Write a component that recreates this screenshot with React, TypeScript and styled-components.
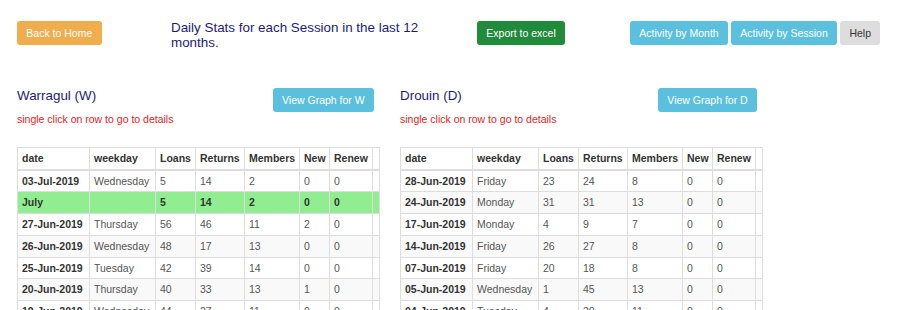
import React from "react";
import styled, { createGlobalStyle } from "styled-components";

const GlobalStyle = createGlobalStyle`
  html, body { margin: 0; padding: 0; background: #ffffff; }
  body { font-family: "Liberation Sans", Arial, Helvetica, sans-serif; }
`;

const Page = styled.div`
  padding: 21px 0 0 17px;
`;

const TopBar = styled.div`
  display: grid;
  grid-template-columns: 154px 306px 153px auto;
  align-items: start;
`;

const Title = styled.div`
  width: 262px;
  font-size: 13.4px;
  line-height: 14.5px;
  color: #1c1c78;
`;

const ButtonGroup = styled.div`
  display: flex;
  gap: 3px;
`;

type Variant = "warning" | "success" | "info" | "light";

const colors: Record<Variant, { bg: string; fg: string }> = {
  warning: { bg: "#f0ad4e", fg: "#ffffff" },
  success: { bg: "#228a3b", fg: "#ffffff" },
  info: { bg: "#5bc0de", fg: "#ffffff" },
  light: { bg: "#dddddd", fg: "#333333" },
};

const Button = styled.button<{ $variant: Variant }>`
  height: 24px;
  padding: 0 9.3px;
  border: none;
  border-radius: 3px;
  font-family: inherit;
  font-size: 10.5px;
  line-height: 24px;
  white-space: nowrap;
  cursor: pointer;
  background: ${(p) => colors[p.$variant].bg};
  color: ${(p) => colors[p.$variant].fg};
`;

const Panels = styled.div`
  display: flex;
  gap: 21px;
  margin-top: 38px;
`;

const Panel = styled.section`
  width: 362px;
`;

const PanelHead = styled.div`
  display: flex;
  justify-content: space-between;
  align-items: flex-start;
  padding-right: 5px;
`;

const Station = styled.h2`
  margin: 0;
  font-weight: normal;
  font-size: 13.4px;
  line-height: 15px;
  color: #1c1c78;
`;

const Hint = styled.div`
  margin-top: 9px;
  font-size: 10.5px;
  line-height: 14px;
  color: #e2231f;
`;

const Table = styled.table`
  margin-top: 21px;
  width: 362px;
  border-collapse: collapse;
  table-layout: fixed;
  font-size: 10.5px;
  line-height: 14.7px;
  color: #555555;
`;

const Th = styled.th`
  text-align: left;
  font-weight: bold;
  color: #333333;
  padding: 3px 4px;
  border: 1px solid #dddddd;
  border-bottom-width: 2px;
  white-space: nowrap;
  overflow: hidden;
`;

const Row = styled.tr<{ $highlight?: boolean }>`
  background: ${(p) => (p.$highlight ? "#90ee90" : "#ffffff")};
  &:nth-child(even) {
    background: ${(p) => (p.$highlight ? "#90ee90" : "#f9f9f9")};
  }
  ${(p) => (p.$highlight ? "font-weight: bold; color: #333333;" : "")}
`;

const Td = styled.td<{ $strong?: boolean }>`
  padding: 3px 4px;
  border: 1px solid #dddddd;
  white-space: nowrap;
  overflow: hidden;
  ${(p) => (p.$strong ? "font-weight: bold; color: #333333;" : "")}
`;

const widths = [72, 66, 40, 49, 55, 30, 43, 7];
const headers = ["date", "weekday", "Loans", "Returns", "Members", "New", "Renew", ""];

type RowData = { cells: string[]; highlight?: boolean };

const warragul: RowData[] = [
  { cells: ["03-Jul-2019", "Wednesday", "5", "14", "2", "0", "0"] },
  { cells: ["July", "", "5", "14", "2", "0", "0"], highlight: true },
  { cells: ["27-Jun-2019", "Thursday", "56", "46", "11", "2", "0"] },
  { cells: ["26-Jun-2019", "Wednesday", "48", "17", "13", "0", "0"] },
  { cells: ["25-Jun-2019", "Tuesday", "42", "39", "14", "0", "0"] },
  { cells: ["20-Jun-2019", "Thursday", "40", "33", "13", "1", "0"] },
  { cells: ["19-Jun-2019", "Wednesday", "44", "27", "11", "0", "0"] },
];

const drouin: RowData[] = [
  { cells: ["28-Jun-2019", "Friday", "23", "24", "8", "0", "0"] },
  { cells: ["24-Jun-2019", "Monday", "31", "31", "13", "0", "0"] },
  { cells: ["17-Jun-2019", "Monday", "4", "9", "7", "0", "0"] },
  { cells: ["14-Jun-2019", "Friday", "26", "27", "8", "0", "0"] },
  { cells: ["07-Jun-2019", "Friday", "20", "18", "8", "0", "0"] },
  { cells: ["05-Jun-2019", "Wednesday", "1", "45", "13", "0", "0"] },
  { cells: ["04-Jun-2019", "Tuesday", "4", "30", "11", "0", "0"] },
];

function StatsTable({ rows }: { rows: RowData[] }) {
  return (
    <Table>
      <colgroup>
        {widths.map((w, i) => (
          <col key={i} style={{ width: w }} />
        ))}
      </colgroup>
      <thead>
        <tr>
          {headers.map((h, i) => (
            <Th key={i}>{h}</Th>
          ))}
        </tr>
      </thead>
      <tbody>
        {rows.map((r, ri) => (
          <Row key={ri} $highlight={r.highlight}>
            {r.cells.map((c, ci) => (
              <Td key={ci} $strong={ci === 0}>
                {c}
              </Td>
            ))}
            <Td />
          </Row>
        ))}
      </tbody>
    </Table>
  );
}

function StationPanel({ name, code, rows }: { name: string; code: string; rows: RowData[] }) {
  return (
    <Panel>
      <PanelHead>
        <div>
          <Station>
            {name} ({code})
          </Station>
          <Hint>single click on row to go to details</Hint>
        </div>
        <Button $variant="info">View Graph for {code}</Button>
      </PanelHead>
      <StatsTable rows={rows} />
    </Panel>
  );
}

export default function App() {
  return (
    <>
      <GlobalStyle />
      <Page>
        <TopBar>
          <div>
            <Button $variant="warning">Back to Home</Button>
          </div>
          <Title>Daily Stats for each Session in the last 12 months.</Title>
          <div>
            <Button $variant="success">Export to excel</Button>
          </div>
          <ButtonGroup>
            <Button $variant="info">Activity by Month</Button>
            <Button $variant="info">Activity by Session</Button>
            <Button $variant="light">Help</Button>
          </ButtonGroup>
        </TopBar>
        <Panels>
          <StationPanel name="Warragul" code="W" rows={warragul} />
          <StationPanel name="Drouin" code="D" rows={drouin} />
        </Panels>
      </Page>
    </>
  );
}
